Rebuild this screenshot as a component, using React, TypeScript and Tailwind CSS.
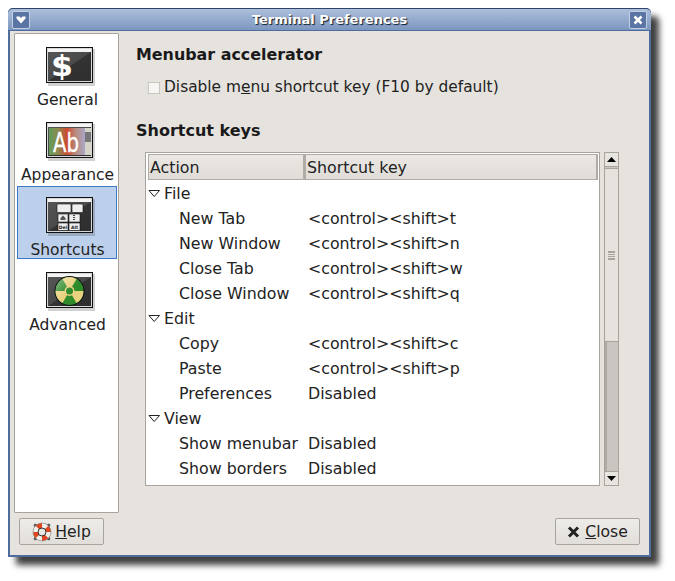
import React from 'react';

const FONT = "font-['DejaVu_Sans',sans-serif]";

// Frame shared by the four sidebar icons
function TerminalFrame({ id, children }: { id: string; children: React.ReactNode }) {
  return (
    <svg width="50" height="39" viewBox="0 0 50 39" className="block">
      <defs>
        <linearGradient id={id} x1="0" y1="0" x2="1" y2="1">
          <stop offset="0" stopColor="#555" />
          <stop offset="0.5" stopColor="#4a4a4a" />
          <stop offset="0.5" stopColor="#333" />
          <stop offset="1" stopColor="#2e2e2e" />
        </linearGradient>
      </defs>
      <rect x="2" y="2" width="47" height="37" fill="#000" opacity="0.18" />
      <rect x="0.5" y="0.5" width="46" height="35" fill="#d8d8d8" stroke="#111" />
      <rect x="2" y="2" width="43" height="3" fill="#f4f4f4" />
      <rect x="2" y="5" width="43" height="29" fill={`url(#${id})`} />
      {children}
    </svg>
  );
}

function GeneralIcon() {
  return (
    <TerminalFrame id="g1">
      <text x="5" y="29" textLength="22" lengthAdjust="spacingAndGlyphs" fontFamily="DejaVu Sans" fontWeight="700" fontSize="29" fill="#fff">$</text>
    </TerminalFrame>
  );
}

function AppearanceIcon() {
  return (
    <TerminalFrame id="g2">
      <defs>
        <linearGradient id="rainbow" x1="0" y1="0" x2="1" y2="0">
          <stop offset="0" stopColor="#5f9c58" />
          <stop offset="0.25" stopColor="#8d8a4e" />
          <stop offset="0.5" stopColor="#cc4a30" />
          <stop offset="0.75" stopColor="#b98d80" />
          <stop offset="1" stopColor="#a9a6c8" />
        </linearGradient>
      </defs>
      <rect x="3" y="6" width="36" height="27" fill="url(#rainbow)" />
      <rect x="39" y="6" width="6" height="27" fill="#d6d3c8" />
      <rect x="39" y="10" width="6" height="10" fill="#777" />
      <text x="7" y="30" textLength="26" lengthAdjust="spacingAndGlyphs" fontFamily="DejaVu Sans" fontSize="26" stroke="#fff" strokeWidth="0.3" fill="#fff">Ab</text>
    </TerminalFrame>
  );
}

function ShortcutsIcon() {
  return (
    <TerminalFrame id="g3">
      <rect x="11" y="7" width="14" height="8.5" rx="1" fill="#eee" stroke="#111" strokeWidth="0.6" />
      <rect x="26" y="7" width="11" height="8.5" rx="1" fill="#eee" stroke="#111" strokeWidth="0.6" />
      <rect x="12" y="17" width="10" height="8" fill="#eee" stroke="#111" strokeWidth="0.6" />
      <rect x="23" y="17" width="11" height="8" fill="#eee" stroke="#111" strokeWidth="0.6" />
      <rect x="12" y="26" width="10" height="7.5" fill="#eee" stroke="#111" strokeWidth="0.6" />
      <rect x="23" y="26" width="11" height="7.5" fill="#eee" stroke="#111" strokeWidth="0.6" />
      <path d="M17 18.5l2.5 2.5v2h-5v-2z" fill="#555" />
      <path d="M27 18.5h2M27 20.5h2M27 22.5h2" stroke="#444" strokeWidth="1" />
      <text x="17" y="32" textAnchor="middle" fontFamily="DejaVu Sans" fontWeight="700" fontSize="4.5" fill="#222">Del</text>
      <text x="28.5" y="32" textAnchor="middle" fontFamily="DejaVu Sans" fontWeight="700" fontSize="4.5" fill="#222">Alt</text>
    </TerminalFrame>
  );
}

function AdvancedIcon() {
  return (
    <TerminalFrame id="g4">
      <defs>
        <linearGradient id="gloss" x1="0" y1="0" x2="1" y2="1">
          <stop offset="0" stopColor="#fff" stopOpacity="0.45" />
          <stop offset="0.5" stopColor="#fff" stopOpacity="0" />
        </linearGradient>
      </defs>
      <circle cx="23.5" cy="19" r="15" fill="#0d0d0d" />
      <circle cx="23.5" cy="19" r="14" fill="#2f8a2a" />
      <g fill="#e9d27f">
        <path d="M23.5 19 L16.5 6.9 A14 14 0 0 1 30.5 6.9 Z" />
        <path d="M23.5 19 L37.5 19 A14 14 0 0 1 30.5 31.1 Z" />
        <path d="M23.5 19 L16.5 31.1 A14 14 0 0 1 9.5 19 Z" />
      </g>
      <circle cx="23.5" cy="19" r="5" fill="#e9d27f" />
      <circle cx="23.5" cy="19" r="3.5" fill="#2f8a2a" />
      <circle cx="23.5" cy="19" r="14" fill="url(#gloss)" />
    </TerminalFrame>
  );
}

function SidebarItem({ label, icon, active }: { label: string; icon: React.ReactNode; active?: boolean }) {
  return (
    <div className={`h-[73px] w-[100px] flex flex-col items-center pt-[10px] border ${active ? 'bg-[#bdd0eb] border-[#3f78c4]' : 'border-transparent'}`}>
      <div className="h-[39px] pl-[8px]">{icon}</div>
      <span className="mt-[5px] pl-[2px] text-[15.5px] leading-[19px] text-[#222]">{label}</span>
    </div>
  );
}

function Expander() {
  return (
    <svg width="13" height="9" viewBox="0 0 13 9" className="block">
      <path d="M1 1.5h10.5L6.2 7.5z" fill="#fff" stroke="#222" strokeWidth="1" />
    </svg>
  );
}

const rows: { label: string; keys?: string; group?: boolean }[] = [
  { label: 'File', group: true },
  { label: 'New Tab', keys: '<control><shift>t' },
  { label: 'New Window', keys: '<control><shift>n' },
  { label: 'Close Tab', keys: '<control><shift>w' },
  { label: 'Close Window', keys: '<control><shift>q' },
  { label: 'Edit', group: true },
  { label: 'Copy', keys: '<control><shift>c' },
  { label: 'Paste', keys: '<control><shift>p' },
  { label: 'Preferences', keys: 'Disabled' },
  { label: 'View', group: true },
  { label: 'Show menubar', keys: 'Disabled' },
  { label: 'Show borders', keys: 'Disabled' },
];

function TreeRow({ label, keys, group }: { label: string; keys?: string; group?: boolean }) {
  return (
    <div className="h-[25px] pt-[2px] flex items-center text-[15.8px] text-[#222]">
      {group ? (
        <div className="flex items-center">
          <Expander />
          <span className="ml-[3px]">{label}</span>
        </div>
      ) : (
        <>
          <span className="w-[160px] pl-[31px] shrink-0">{label}</span>
          <span>{keys}</span>
        </>
      )}
    </div>
  );
}

function HeaderCell({ children, className }: { children: React.ReactNode; className: string }) {
  return (
    <div className={`h-[26px] pt-[2px] flex items-center pl-[1px] text-[15.8px] text-[#222] bg-gradient-to-b from-[#ebe8e4] to-[#e0ddd9] border border-[#b0aca5] border-r-2 ${className}`}>
      {children}
    </div>
  );
}

function Scrollbar() {
  return (
    <div className="w-[15px] h-[334px] flex flex-col border border-[#a8a49d] bg-[#c9c6c2]">
      <div className="h-[14px] flex items-center justify-center bg-[#e8e5e1] border-b border-[#a8a49d]">
        <svg width="9" height="5" viewBox="0 0 9 5"><path d="M4.5 0L9 5H0z" fill="#000" /></svg>
      </div>
      <div className="mt-px h-[174px] flex items-center justify-center bg-[#e6e3df] border-y border-[#a8a49d]">
        <div className="w-[7px] h-[9px] border-y border-[#a8a49d] bg-[repeating-linear-gradient(to_bottom,#a8a49d_0,#a8a49d_1px,#e6e3df_1px,#e6e3df_2px)]" />
      </div>
      <div className="flex-1 border-l-2 border-[#aeaaa4]" />
      <div className="h-[14px] flex items-center justify-center bg-[#e8e5e1] border-t border-[#a8a49d]">
        <svg width="9" height="5" viewBox="0 0 9 5"><path d="M0 0h9L4.5 5z" fill="#000" /></svg>
      </div>
    </div>
  );
}

function Button({ icon, children, className }: { icon: React.ReactNode; children: React.ReactNode; className: string }) {
  return (
    <button className={`h-[27px] flex items-center justify-center gap-[3px] rounded-[2px] border border-[#a8a49d] bg-gradient-to-b from-[#eeece8] to-[#e2dfdb] text-[15.6px] text-[#222] ${className}`}>
      {icon}
      {children}
    </button>
  );
}

function LifebuoyIcon() {
  return (
    <svg width="20" height="20" viewBox="0 0 20 20">
      <path d="M3 1.5L6 3 3 6 1.5 3zM17 1.5L18.5 3 17 6 14 3zM3 18.5L6 17 3 14 1.5 17zM17 18.5L14 17l3-3 1.500 3z" fill="#555" />
      <circle cx="10" cy="10" r="6.5" fill="none" stroke="#f0efe9" strokeWidth="5" />
      <path d="M5.400 5.400A6.500 6.500 0 0 1 10 3.500M14.600 14.600A6.500 6.500 0 0 1 10 16.500M3.500 10a6.500 6.500 0 0 0 1.900 4.600M16.500 10a6.500 6.500 0 0 0-1.900-4.600" fill="none" stroke="#e2451f" strokeWidth="5" />
      <circle cx="10" cy="10" r="4" fill="none" stroke="#333" strokeWidth="1" />
      <circle cx="10" cy="10" r="9" fill="none" stroke="#777" strokeWidth="0.6" />
    </svg>
  );
}

function CloseGlyph() {
  return (
    <svg width="13" height="12" viewBox="0 0 13 12">
      <path d="M2 1.500l9 9M11 1.500l-9 9" stroke="#222" strokeWidth="3" />
    </svg>
  );
}

function TitleButton({ children }: { children: React.ReactNode }) {
  return (
    <div className="w-[18px] h-[18px] flex items-center justify-center rounded-[2px] bg-[#5a75a3] border border-[#c3d0e4]">
      {children}
    </div>
  );
}

export default function App() {
  return (
    <div className={`w-[675px] h-[581px] bg-white pt-2 pl-2 ${FONT}`}>
      <div className="w-[643px] h-[549px] flex flex-col rounded-t-[5px] bg-[#e6e3df] border-2 border-t-0 border-[#4f6c9f] shadow-[8px_8px_6px_rgba(0,0,0,0.75)]">
        {/* Title bar */}
        <div className="h-[23px] -mx-[2px] px-[4px] flex items-center justify-between rounded-t-[5px] border-t border-[#2e4468] border-b border-b-[#4f6c9f] bg-gradient-to-b from-[#adc0dc] to-[#7c96bf]">
          <TitleButton>
            <svg width="10" height="8" viewBox="0 0 10 8"><path d="M0.500 0.500h3L5 2l1.500-1.500h3v2L5 7.500 0.500 2.500z" fill="#fff" /></svg>
          </TitleButton>
          <span className="text-[13px] font-bold text-white [text-shadow:1px_1px_1px_#101828]">Terminal Preferences</span>
          <TitleButton>
            <svg width="10" height="10" viewBox="0 0 10 10"><path d="M1.500 1.500l7 7M8.500 1.500l-7 7" stroke="#fff" strokeWidth="2.600" /></svg>
          </TitleButton>
        </div>

        {/* Body */}
        <div className="flex-1 flex flex-col pl-[4px] pr-[9px]">
          <div className="flex mt-[2px] h-[480px]">
            <div className="w-[105px] flex flex-col gap-[2px] items-center pt-[2px] bg-white border border-[#a8a49d] rounded-[1px]">
              <SidebarItem label="General" icon={<GeneralIcon />} />
              <SidebarItem label="Appearance" icon={<AppearanceIcon />} />
              <SidebarItem label="Shortcuts" icon={<ShortcutsIcon />} active />
              <SidebarItem label="Advanced" icon={<AdvancedIcon />} />
            </div>

            <div className="flex-1 pl-[17px]">
              <h2 className="mt-[12px] h-[20px] leading-[20px] text-[15.900px] font-bold text-[#1a1a1a]">Menubar accelerator</h2>
              <label className="mt-[13px] ml-[12px] h-[20px] flex items-center text-[15.400px] text-[#222]">
                <span className="w-[12px] h-[12px] border border-[#c9c6c2] bg-[#f7f6f4]" />
                <span className="ml-[4px]">Disable m<span className="underline">e</span>nu shortcut key (F10 by default)</span>
              </label>
              <h2 className="mt-[23px] h-[20px] leading-[20px] text-[16px] font-bold text-[#1a1a1a]">Shortcut keys</h2>
              <div className="mt-[11px] ml-[9px] flex gap-[4px]">
                <div className="w-[455px] h-[334px] bg-white border border-[#a8a49d] pl-[2px] pr-px pt-[1px]">
                  <div className="flex">
                    <HeaderCell className="w-[157px]">Action</HeaderCell>
                    <HeaderCell className="flex-1">Shortcut key</HeaderCell>
                  </div>
                  {rows.map((r) => (
                    <TreeRow key={r.label} {...r} />
                  ))}
                </div>
                <Scrollbar />
              </div>
            </div>
          </div>

          {/* Buttons */}
          <div className="mt-[5px] flex justify-between pl-[5px]">
            <Button icon={<LifebuoyIcon />} className="w-[85px]">
              <span className="pt-[2px]"><span className="underline">H</span>elp</span>
            </Button>
            <Button icon={<CloseGlyph />} className="w-[85px]">
              <span className="ml-[2px] pt-[2px]"><span className="underline">C</span>lose</span>
            </Button>
          </div>
        </div>
      </div>
    </div>
  );
}
